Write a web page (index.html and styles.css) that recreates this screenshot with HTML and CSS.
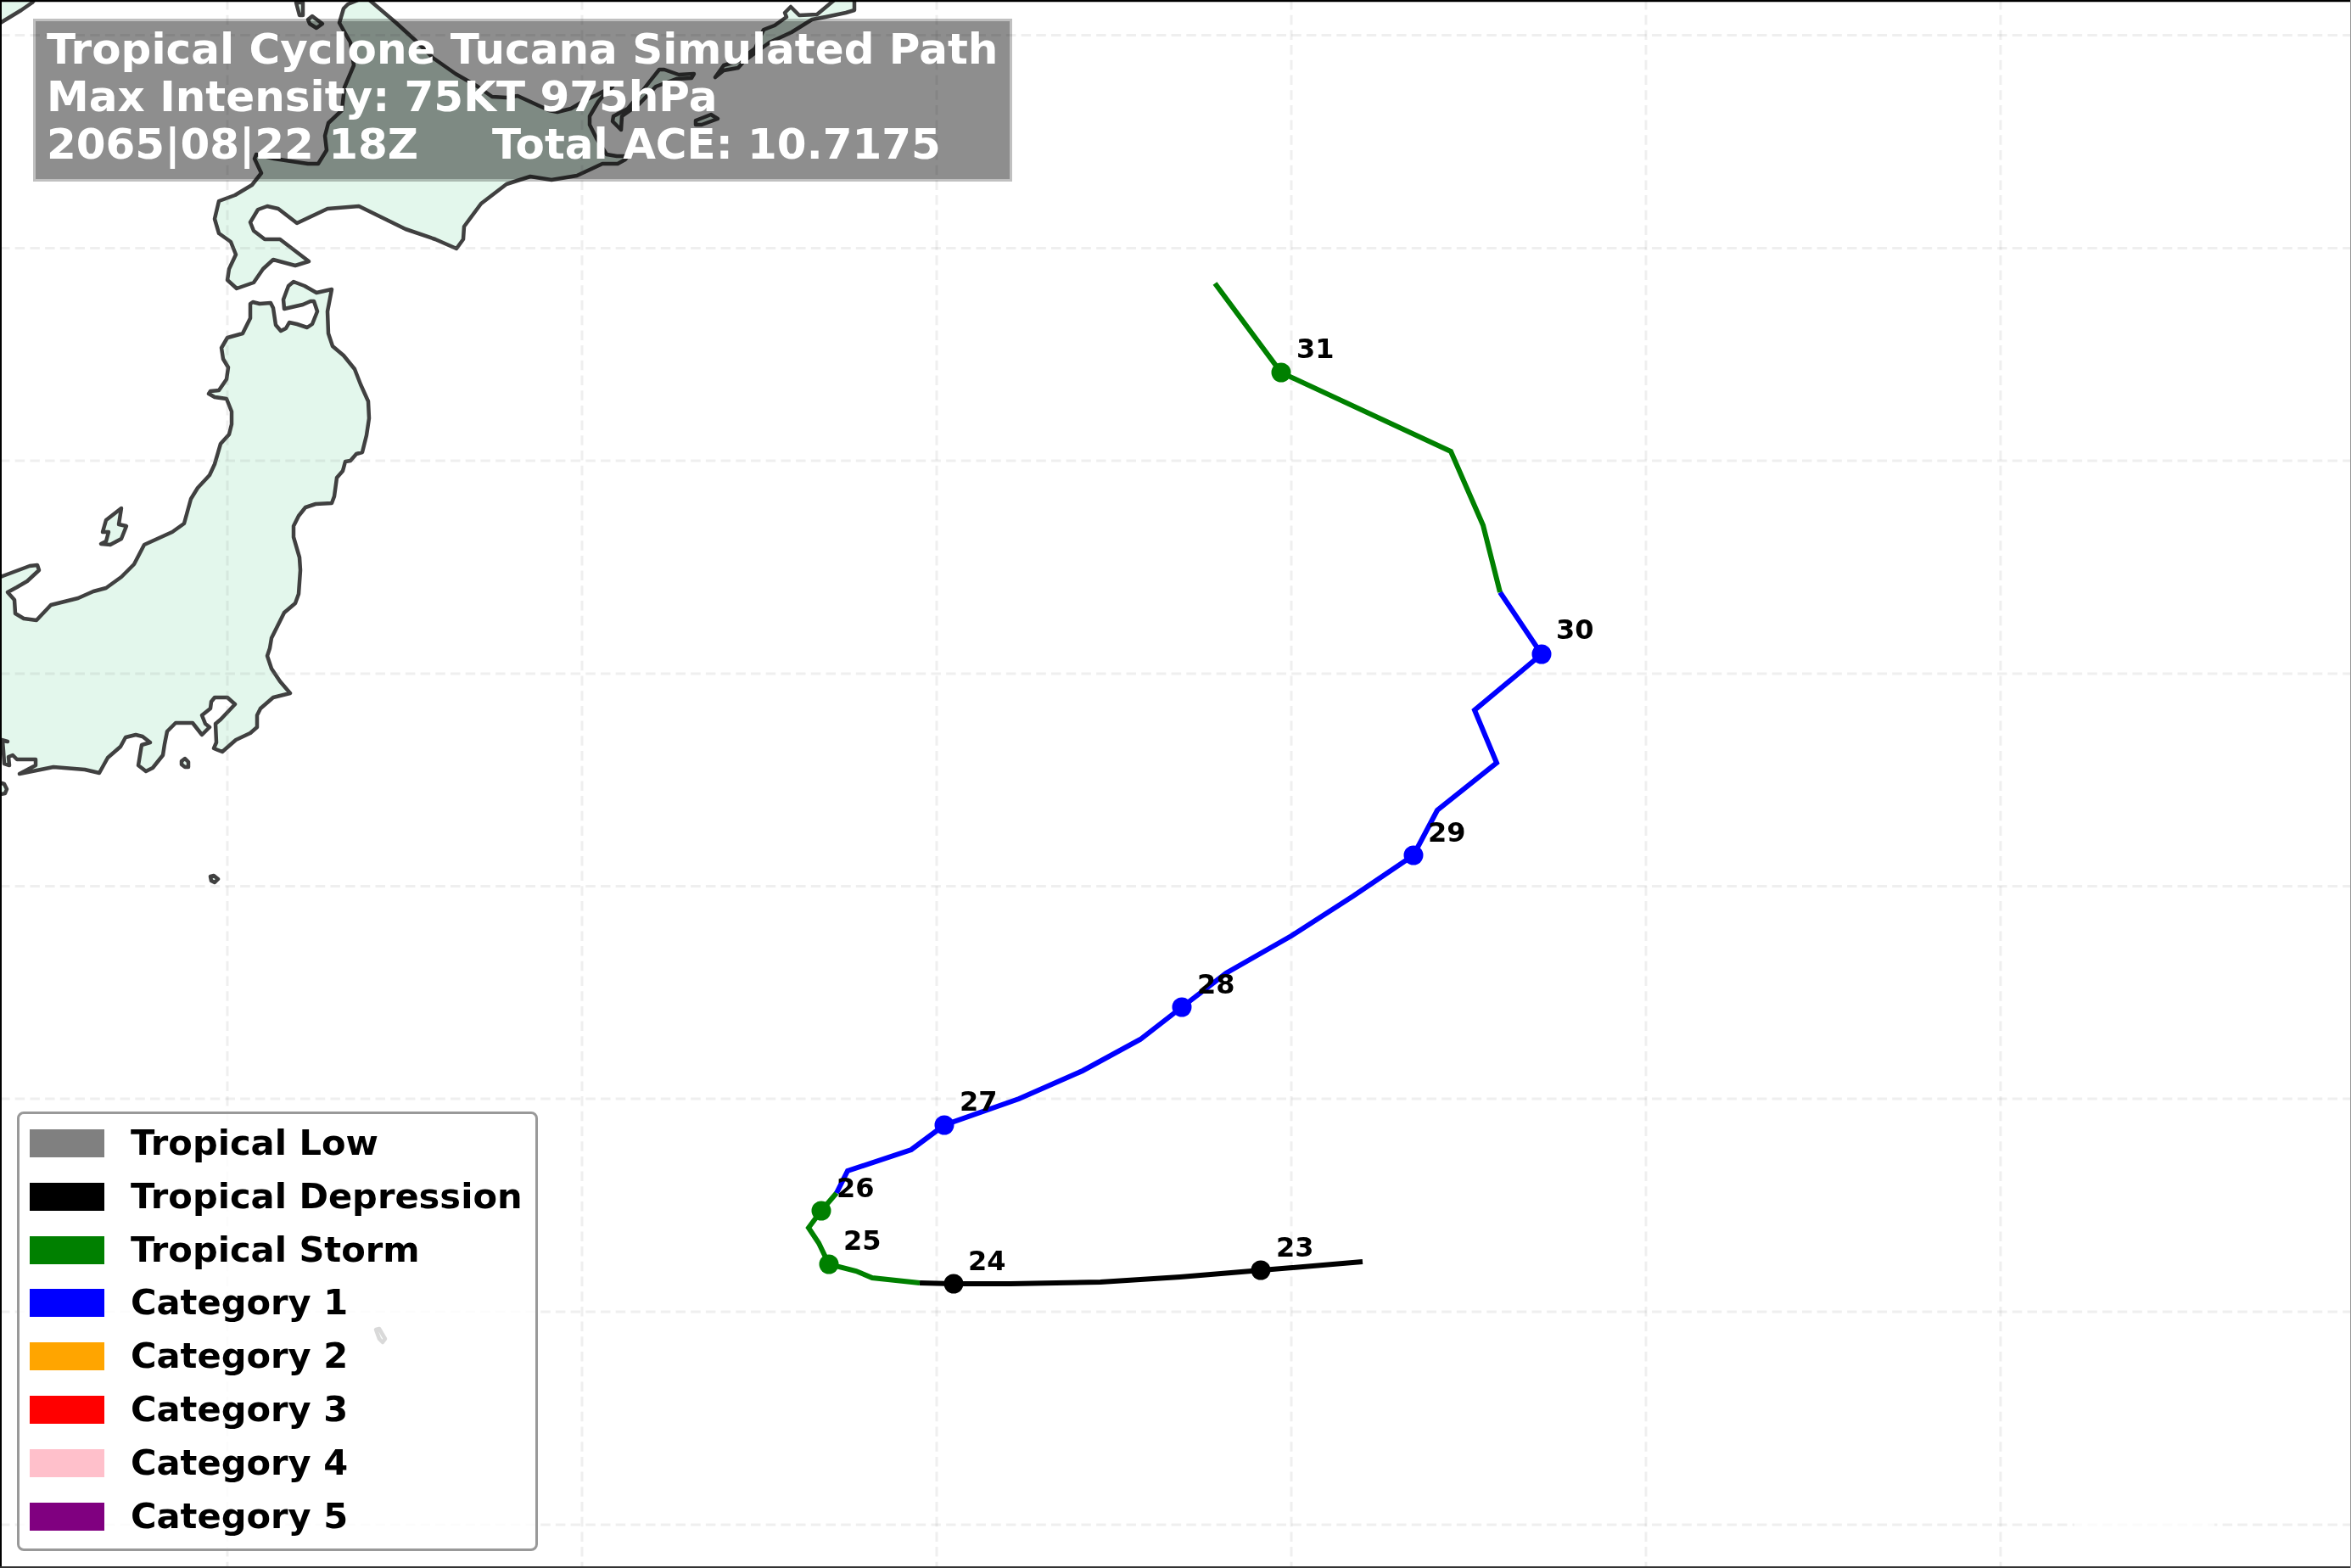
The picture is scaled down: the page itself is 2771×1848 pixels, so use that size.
FILE: index.html
```html
<!DOCTYPE html>
<html lang="en">
<head>
<meta charset="utf-8">
<title>Tropical Cyclone Tucana Simulated Path</title>
<link rel="stylesheet" href="styles.css">
</head>
<body>
<main class="figure">
  <div class="title-box"></div>
  <svg class="map" width="2771" height="1848" viewBox="0 0 2771 1848" xmlns="http://www.w3.org/2000/svg">
    <g class="land">
      <polygon points="-6,-6 45,-6 38,3 25,12 2,26 -6,31"/>
      <!-- Honshu -->
      <polygon points="295,358 298,356 306,358 319,357 322,363 325,383 331,390 337,387 341,380 350,382 362,386 368,382 374,367 370,355 366,355 357,359 335,364 334,353 340,337 346,332 359,337 373,345 391,341 386,367 387,393 392,408 405,419 418,435 425,453 434,473 435,493 432,513 427,533 420,535 413,543 407,544 404,555 397,563 394,585 391,593 372,594 360,598 352,608 346,620 346,633 353,657 354,672 352,700 348,711 335,722 327,738 320,752 318,764 315,773 320,788 330,803 342,817 322,822 307,835 303,843 303,857 295,864 278,872 262,886 252,882 255,875 254,853 260,848 277,830 268,822 253,822 249,827 248,835 238,843 242,853 247,857 238,866 227,852 207,852 197,862 194,877 192,890 180,905 172,909 163,902 167,878 177,875 168,868 160,866 148,869 142,880 127,893 117,911 100,907 63,904 23,912 42,902 42,895 20,895 15,890 10,892 11,902 5,900 4,885 3,873 9,874 2,872 -8,872 -8,682 3,679 35,667 44,666 46,672 32,685 20,692 9,698 17,707 18,723 28,729 43,731 60,713 92,705 110,697 125,693 143,680 158,665 170,642 203,627 217,617 225,588 233,575 247,560 253,547 260,523 270,512 273,500 273,485 267,470 253,468 246,464 248,461 258,460 267,447 269,433 263,423 261,410 268,398 286,393 295,375"/>
      <!-- Hokkaido -->
      <polygon points="427,-2 410,5 405,10 400,27 413,50 417,77 406,103 403,130 387,145 383,160 385,177 375,193 363,193 343,190 323,187 302,182 300,187 308,204 297,218 277,230 258,237 253,258 258,275 272,285 278,300 270,317 268,330 279,340 299,333 310,317 322,306 348,313 364,308 330,282 312,282 299,272 295,262 304,247 315,243 328,246 350,263 386,246 423,243 478,270 513,282 538,293 546,282 547,267 567,240 597,217 625,208 650,212 680,207 695,200 710,193 728,193 737,188 740,184 727,184 715,182 703,163 695,147 695,137 705,120 715,108 722,102 703,112 690,118 673,128 657,132 647,130 610,113 597,115 580,114 563,102 537,87 510,68 490,48 467,27 433,-2"/>
      <polygon points="777,82 783,82 800,88 818,87 815,92 797,93 773,102 753,123 733,137 732,153 722,143 723,137 740,128 755,110 765,97"/>
      <polygon points="820,142 838,135 846,140 827,147 820,147"/>
      <polygon points="843,91 853,77 870,72 890,57 900,35 913,30 927,20 925,15 932,8 942,18 963,17 987,-3 1007,-3 1007,12 997,15 973,20 957,23 933,38 907,50 877,72 870,80 853,83"/>
      <polygon points="349,3 357,3 357,18 353,18"/>
      <polygon points="363,23 368,19 380,28 373,33 365,28"/>
      <polygon points="143,599 125,613 121,627 128,627 125,638 119,641 130,642 143,635 149,620 140,618"/>
      <polygon points="214,897 218,894 222,898 222,904 218,904 214,901"/>
      <polygon points="248,1033 252,1032 257,1036 253,1040 249,1038"/>
      <polygon points="-4,921 5,924 8,930 6,935 -4,937"/>
      <polygon points="443,1567 447,1566 454,1578 451,1582 447,1578"/>
    </g>
    <g class="grid">
      <line x1="0" y1="41.5" x2="2771" y2="41.5"/>
      <line x1="0" y1="292.5" x2="2771" y2="292.5"/>
      <line x1="0" y1="543" x2="2771" y2="543"/>
      <line x1="0" y1="794" x2="2771" y2="794"/>
      <line x1="0" y1="1044.5" x2="2771" y2="1044.5"/>
      <line x1="0" y1="1295" x2="2771" y2="1295"/>
      <line x1="0" y1="1546" x2="2771" y2="1546"/>
      <line x1="0" y1="1797" x2="2771" y2="1797"/>
      <line x1="268" y1="0" x2="268" y2="1848"/>
      <line x1="686" y1="0" x2="686" y2="1848"/>
      <line x1="1104" y1="0" x2="1104" y2="1848"/>
      <line x1="1522" y1="0" x2="1522" y2="1848"/>
      <line x1="1940" y1="0" x2="1940" y2="1848"/>
      <line x1="2358" y1="0" x2="2358" y2="1848"/>
    </g>
    <rect class="wash" x="2445" y="1794" width="165" height="6"/>
    <g class="track">
      <polyline class="td" points="1606,1487 1487,1497 1391,1505 1297,1511 1191,1513 1124,1513 1084,1512"/>
      <polyline class="ts" points="1084,1512 1028,1506 1009,1498 977,1490 965,1465 953,1447 968,1427 986,1406"/>
      <polyline class="c1" points="986,1406 999,1380 1074,1355 1113,1326 1201,1295 1276,1262 1344,1225 1393,1187 1445,1147 1522,1103 1595,1056 1666,1008 1694,955 1764,899 1738,837 1817,771 1768,698"/>
      <polyline class="ts" points="1768,698 1748,619 1710,532 1510,439 1432,334"/>
    </g>
    <g class="dots">
      <circle class="dot-td" cx="1486" cy="1497" r="11.5"/>
      <circle class="dot-td" cx="1124" cy="1513" r="11.5"/>
      <circle class="dot-ts" cx="977" cy="1490" r="11.5"/>
      <circle class="dot-ts" cx="968" cy="1427" r="11.5"/>
      <circle class="dot-c1" cx="1113" cy="1326" r="11.5"/>
      <circle class="dot-c1" cx="1393" cy="1187" r="11.5"/>
      <circle class="dot-c1" cx="1666" cy="1008" r="11.5"/>
      <circle class="dot-c1" cx="1817" cy="771" r="11.5"/>
      <circle class="dot-ts" cx="1510" cy="439" r="11.5"/>
    </g>
    <g class="labels">
      <text x="1504" y="1481">23</text>
      <text x="1141" y="1497">24</text>
      <text x="994" y="1473">25</text>
      <text x="986" y="1411">26</text>
      <text x="1131" y="1309">27</text>
      <text x="1411" y="1171">28</text>
      <text x="1683" y="992">29</text>
      <text x="1834" y="753">30</text>
      <text x="1528" y="422">31</text>
    </g>
    <g class="frame">
      <line class="frame-top" x1="0" y1="1" x2="2771" y2="1"/>
      <line class="frame-left" x1="1" y1="0" x2="1" y2="1848"/>
      <line class="frame-bottom" x1="0" y1="1847" x2="2771" y2="1847"/>
      <line class="frame-right" x1="2770.5" y1="0" x2="2770.5" y2="1848"/>
    </g>
  </svg>

  <header class="title">
    <div class="title-line">Tropical Cyclone Tucana Simulated Path</div>
    <div class="title-line">Max Intensity: 75KT 975hPa</div>
    <div class="title-line">2065|08|22 18Z     Total ACE: 10.7175</div>
  </header>

  <aside class="legend">
    <div class="legend-row"><span class="swatch swatch-low"></span><span class="legend-label">Tropical Low</span></div>
    <div class="legend-row"><span class="swatch swatch-td"></span><span class="legend-label">Tropical Depression</span></div>
    <div class="legend-row"><span class="swatch swatch-ts"></span><span class="legend-label">Tropical Storm</span></div>
    <div class="legend-row"><span class="swatch swatch-c1"></span><span class="legend-label">Category 1</span></div>
    <div class="legend-row"><span class="swatch swatch-c2"></span><span class="legend-label">Category 2</span></div>
    <div class="legend-row"><span class="swatch swatch-c3"></span><span class="legend-label">Category 3</span></div>
    <div class="legend-row"><span class="swatch swatch-c4"></span><span class="legend-label">Category 4</span></div>
    <div class="legend-row"><span class="swatch swatch-c5"></span><span class="legend-label">Category 5</span></div>
  </aside>
</main>
</body>
</html>
```

FILE: styles.css
```css
html, body {
  margin: 0;
  padding: 0;
  background: #fff;
  overflow: hidden;
}

.figure {
  position: relative;
  width: 2771px;
  height: 1848px;
  background: #fff;
  isolation: isolate;
  font-family: "DejaVu Sans", sans-serif;
  font-weight: 700;
}

/* The grey title panel sits under the map, and the land tints it. */
.title-box {
  position: absolute;
  left: 39px;
  top: 22px;
  width: 1154px;
  height: 192px;
  box-sizing: border-box;
  border: 3px solid #c0c0c0;
  background: #8e8e8e;
}

.map {
  display: block;
  position: relative;
  mix-blend-mode: multiply;
}

.land polygon {
  fill: #e3f7ec;
  stroke: #404040;
  stroke-width: 4.5;
  stroke-linejoin: round;
}

.grid line {
  stroke: #808080;
  stroke-opacity: 0.13;
  stroke-width: 3;
  stroke-dasharray: 11.5 6.2;
}

.wash {
  fill: #fff;
  fill-opacity: 0.75;
}

.track polyline {
  fill: none;
  stroke-width: 6;
  stroke-linejoin: miter;
}

.track .td { stroke: #000; }
.track .ts { stroke: #008000; }
.track .c1 { stroke: #0000ff; }

.dot-td { fill: #000; }
.dot-ts { fill: #008000; }
.dot-c1 { fill: #0000ff; }

.labels text {
  font-family: "DejaVu Sans", sans-serif;
  font-weight: 700;
  font-size: 32px;
  fill: #000;
}

.frame-top { stroke: #000; stroke-width: 2.4; }
.frame-left { stroke: #000; stroke-width: 2; }
.frame-bottom { stroke: #333; stroke-width: 2; }
.frame-right { stroke: #999; stroke-width: 1; }

.title {
  position: absolute;
  left: 39px;
  top: 22px;
  box-sizing: border-box;
  padding: 8px 0 0 16px;
  color: #fff;
  font-size: 50px;
  line-height: 56px;
}

.title-line {
  white-space: pre;
}

.legend {
  position: absolute;
  left: 20px;
  top: 1310px;
  width: 614px;
  height: 518px;
  box-sizing: border-box;
  padding: 18px 0 0 12px;
  border: 3px solid #999;
  border-radius: 8px;
  background: rgba(255, 255, 255, 0.8);
  display: flex;
  flex-direction: column;
  gap: 29.8px;
}

.legend-row {
  display: flex;
  align-items: center;
  gap: 31px;
  height: 33px;
}

.swatch {
  flex: none;
  width: 88px;
  height: 33px;
}

.swatch-low { background: #808080; }
.swatch-td { background: #000; }
.swatch-ts { background: #008000; }
.swatch-c1 { background: #0000ff; }
.swatch-c2 { background: #ffa500; }
.swatch-c3 { background: #ff0000; }
.swatch-c4 { background: #ffc0cb; }
.swatch-c5 { background: #800080; }

.legend-label {
  font-size: 41.6px;
  line-height: 33px;
  padding-bottom: 2px;
  color: #000;
  white-space: nowrap;
}
```
